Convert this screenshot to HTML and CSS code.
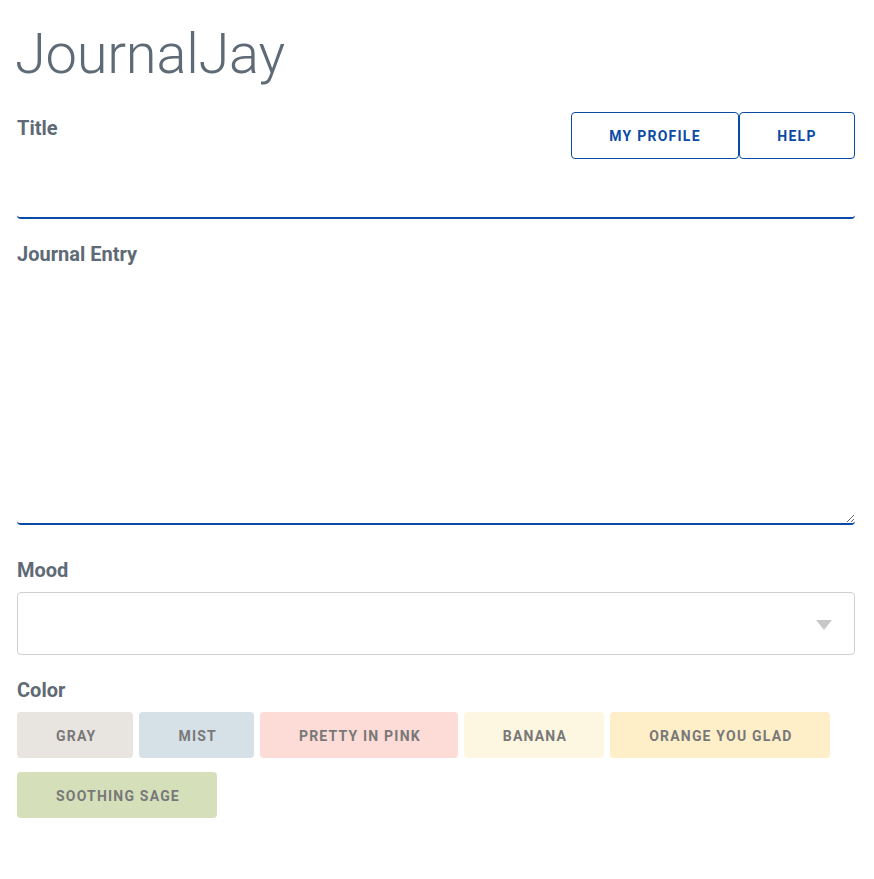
FILE: index.html
```html
<!DOCTYPE html>
<html lang="en">
<head>
<meta charset="utf-8">
<title>JournalJay</title>
<link rel="stylesheet" href="styles.css">
</head>
<body>
<main class="page">
  <h1 class="brand">JournalJay</h1>
  <div class="title-row">
    <label class="field-label" for="title">Title</label>
    <nav class="nav-buttons">
      <button class="outline-btn profile-btn">MY PROFILE</button>
      <button class="outline-btn help-btn">HELP</button>
    </nav>
  </div>
  <input class="title-input" id="title" type="text">
  <label class="field-label entry-label" for="entry">Journal Entry</label>
  <textarea class="entry-input" id="entry"></textarea>
  <label class="field-label mood-label">Mood</label>
  <div class="select-box">
    <span class="select-arrow"></span>
  </div>
  <label class="field-label color-label">Color</label>
  <div class="chips">
    <button class="chip chip-gray">GRAY</button>
    <button class="chip chip-mist">MIST</button>
    <button class="chip chip-pink">PRETTY IN PINK</button>
    <button class="chip chip-banana">BANANA</button>
    <button class="chip chip-orange">ORANGE YOU GLAD</button>
    <button class="chip chip-sage">SOOTHING SAGE</button>
  </div>
</main>
</body>
</html>
```
FILE: styles.css
```css
html, body {
  margin: 0;
  padding: 0;
  background: #ffffff;
}
body {
  font-family: Roboto, "Liberation Sans", sans-serif;
}
.page {
  padding: 0 19px 0 17px;
  display: flex;
  flex-direction: column;
}
.brand {
  margin: 18px 0 0 -2px;
  font-size: 56px;
  line-height: 72px;
  font-weight: 300;
  color: #5e6a75;
  letter-spacing: -0.25px;
}
.field-label {
  display: block;
  font-size: 20px;
  font-weight: 700;
  color: #5e6a75;
  line-height: 24px;
}
.title-row {
  display: flex;
  justify-content: space-between;
  align-items: flex-start;
  margin-top: 22px;
}
.title-row .field-label {
  margin-top: 4px;
}
.nav-buttons {
  display: flex;
}
.outline-btn {
  height: 47px;
  background: #fff;
  border: 1px solid #0b4aa6;
  border-radius: 4px;
  color: #0b4aa6;
  font-family: Roboto, "Liberation Sans", sans-serif;
  font-size: 14px;
  font-weight: 700;
  letter-spacing: 1.25px;
  padding: 1px 0 0;
}
.profile-btn { width: 168px; }
.help-btn { width: 116px; }
.title-input {
  display: block;
  height: 60px;
  border: none;
  border-bottom: 2px solid #0b4aa6;
  border-radius: 0 0 4px 4px;
  outline: none;
  padding: 0;
  margin: 0;
  width: 100%;
  box-sizing: border-box;
}
.entry-label {
  margin-top: 23px;
}
.entry-input {
  display: block;
  height: 259px;
  border: none;
  border-bottom: 2px solid #0b4aa6;
  border-radius: 0 0 4px 4px;
  outline: none;
  padding: 0;
  margin: 0;
  width: 100%;
  box-sizing: border-box;
  resize: vertical;
  font-family: Roboto, sans-serif;
}
.mood-label {
  margin-top: 33px;
}
.select-box {
  margin-top: 10px;
  height: 63px;
  box-sizing: border-box;
  border: 1px solid #cfcfcf;
  border-radius: 4px;
  display: flex;
  align-items: center;
  justify-content: flex-end;
  padding-right: 22px;
}
.select-arrow {
  width: 0;
  height: 0;
  border-left: 8px solid transparent;
  border-right: 8px solid transparent;
  border-top: 10px solid #c8c8c8;
  margin-top: 2px;
}
.color-label {
  margin-top: 23px;
}
.chips {
  display: flex;
  flex-wrap: wrap;
  column-gap: 6px;
  row-gap: 14px;
  margin-top: 10px;
  padding-right: 20px;
}
.chip {
  height: 46px;
  border: none;
  border-radius: 4px;
  padding: 2px 37px 0 39px;
  font-family: Roboto, "Liberation Sans", sans-serif;
  font-size: 14px;
  font-weight: 700;
  letter-spacing: 1.2px;
  color: #787878;
}
.chip-gray { background: #e8e4df; }
.chip-mist { background: #d6e0e7; }
.chip-pink { background: #fddbd6; }
.chip-banana { background: #fdf6e0; }
.chip-orange { background: #feefc9; }
.chip-sage { background: #d5e0ba; }
```
